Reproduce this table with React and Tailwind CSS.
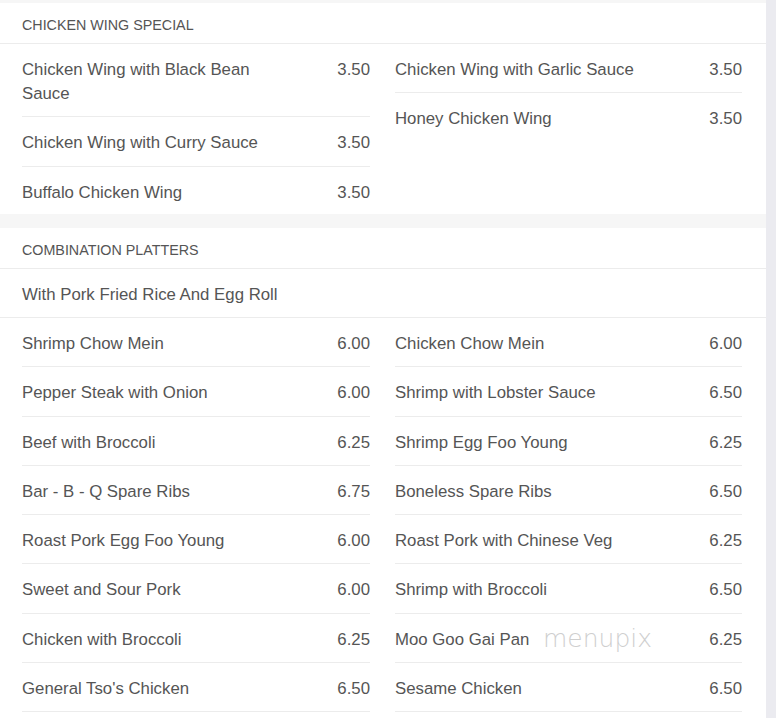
const wingLeft = [
  { name: 'Chicken Wing with Black Bean Sauce', price: '3.50' },
  { name: 'Chicken Wing with Curry Sauce', price: '3.50' },
  { name: 'Buffalo Chicken Wing', price: '3.50' },
];
const wingRight = [
  { name: 'Chicken Wing with Garlic Sauce', price: '3.50' },
  { name: 'Honey Chicken Wing', price: '3.50' },
];

const comboLeft = [
  { name: 'Shrimp Chow Mein', price: '6.00' },
  { name: 'Pepper Steak with Onion', price: '6.00' },
  { name: 'Beef with Broccoli', price: '6.25' },
  { name: 'Bar - B - Q Spare Ribs', price: '6.75' },
  { name: 'Roast Pork Egg Foo Young', price: '6.00' },
  { name: 'Sweet and Sour Pork', price: '6.00' },
  { name: 'Chicken with Broccoli', price: '6.25' },
  { name: "General Tso's Chicken", price: '6.50' },
];
const comboRight = [
  { name: 'Chicken Chow Mein', price: '6.00' },
  { name: 'Shrimp with Lobster Sauce', price: '6.50' },
  { name: 'Shrimp Egg Foo Young', price: '6.25' },
  { name: 'Boneless Spare Ribs', price: '6.50' },
  { name: 'Roast Pork with Chinese Veg', price: '6.25' },
  { name: 'Shrimp with Broccoli', price: '6.50' },
  { name: 'Moo Goo Gai Pan', price: '6.25', mark: true },
  { name: 'Sesame Chicken', price: '6.50' },
];

function Item({ item, last }) {
  return (
    <div className={`relative flex items-start justify-between gap-6 pt-[14px] pb-[10.3px] ${last ? '' : 'border-b border-[#ececec]'}`}>
      <span className="max-w-[275px] text-[16.8px] leading-6 text-[#555]">{item.name}</span>
      <span className="text-[16.8px] leading-6 text-[#555] shrink-0">{item.price}</span>
      {item.mark && (
        <span className="absolute left-[148px] top-[9px] text-[25px] leading-8 font-extralight text-[#cfcfcf] [font-family:'DejaVu_Sans',sans-serif]">
          menupix
        </span>
      )}
    </div>
  );
}

function Column({ items, lastNoBorder }) {
  return (
    <div className="flex flex-col">
      {items.map((it, i) => (
        <Item key={it.name} item={it} last={lastNoBorder && i === items.length - 1} />
      ))}
    </div>
  );
}

function Header({ title }) {
  return (
    <div className="h-[41px] pt-[13px] px-[22px] border-b border-[#ececec]">
      <span className="block text-[14.3px] leading-[18px] uppercase text-[#555]">{title}</span>
    </div>
  );
}

export default function App() {
  return (
    <div className="w-[776px] h-[718px] overflow-hidden flex bg-[#ebebf0] [font-family:'Liberation_Sans',Arial,sans-serif]">
      <div className="w-[766px] bg-[#f6f6f6] pt-[3px] flex flex-col gap-[14px]">
        {/* Chicken wing special */}
        <section className="bg-white h-[211px]">
          <Header title="Chicken Wing Special" />
          <div className="grid grid-cols-[348px_347px] gap-x-[25px] pl-[22px] pr-[24px]">
            <Column items={wingLeft} lastNoBorder />
            <Column items={wingRight} lastNoBorder />
          </div>
        </section>

        {/* Combination platters */}
        <section className="bg-white flex-1">
          <Header title="Combination Platters" />
          <div className="px-[22px] pt-[14px] pb-[10px] border-b border-[#ececec]">
            <span className="text-[16.8px] leading-6 text-[#555]">With Pork Fried Rice And Egg Roll</span>
          </div>
          <div className="grid grid-cols-[348px_347px] gap-x-[25px] pl-[22px] pr-[24px]">
            <Column items={comboLeft} />
            <Column items={comboRight} />
          </div>
        </section>
      </div>
    </div>
  );
}
